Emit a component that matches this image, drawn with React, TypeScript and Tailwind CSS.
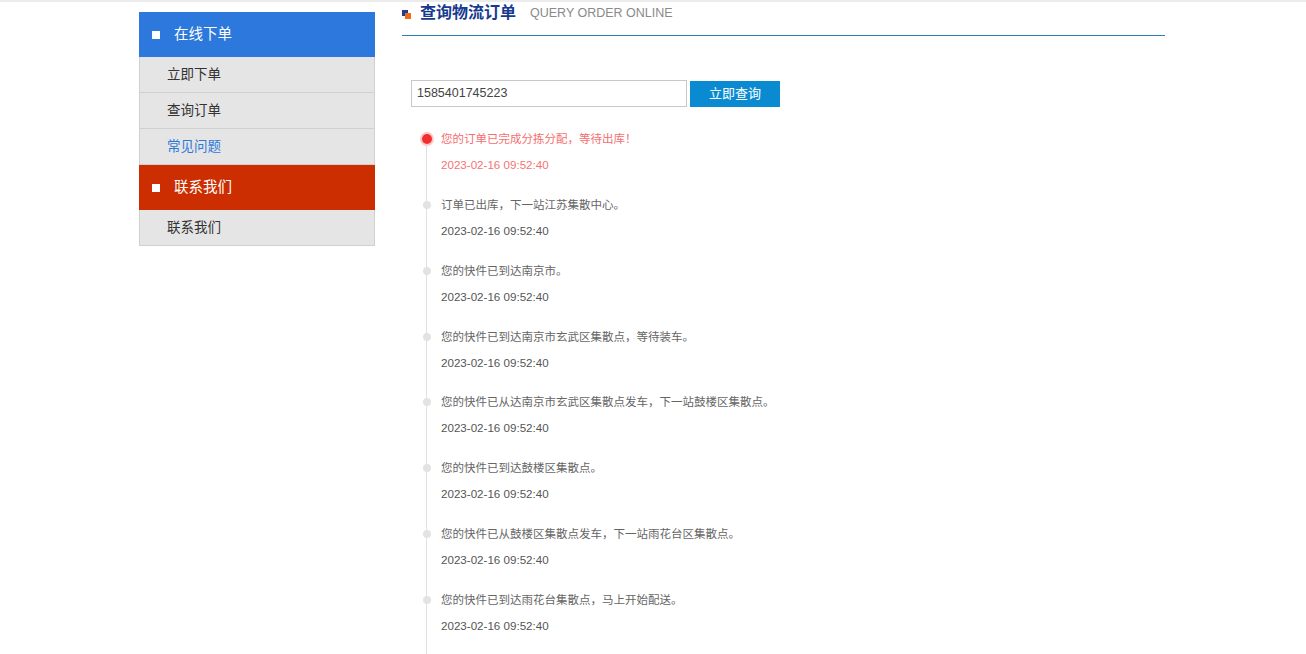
import React from 'react';

const font = { fontFamily: '"Liberation Sans", "Noto Sans CJK SC", sans-serif' };

interface TrackItem {
  text: string;
  time: string;
}

const tracks: TrackItem[] = [
  { text: '您的订单已完成分拣分配，等待出库！', time: '2023-02-16 09:52:40' },
  { text: '订单已出库，下一站江苏集散中心。', time: '2023-02-16 09:52:40' },
  { text: '您的快件已到达南京市。', time: '2023-02-16 09:52:40' },
  { text: '您的快件已到达南京市玄武区集散点，等待装车。', time: '2023-02-16 09:52:40' },
  { text: '您的快件已从达南京市玄武区集散点发车，下一站鼓楼区集散点。', time: '2023-02-16 09:52:40' },
  { text: '您的快件已到达鼓楼区集散点。', time: '2023-02-16 09:52:40' },
  { text: '您的快件已从鼓楼区集散点发车，下一站雨花台区集散点。', time: '2023-02-16 09:52:40' },
  { text: '您的快件已到达雨花台集散点，马上开始配送。', time: '2023-02-16 09:52:40' },
];

function SideHeader({ title, color }: { title: string; color: string }) {
  return (
    <div className={`flex items-center h-[45px] pl-[13px] ${color}`}>
      <span className="w-[8px] h-[8px] bg-white" />
      <span className="ml-[14px] text-[14.5px] text-white">{title}</span>
    </div>
  );
}

function SideItem({ label, active }: { label: string; active?: boolean }) {
  return (
    <div
      className={`flex items-center h-[36px] pl-[27px] pt-[1px] bg-[#e5e5e5] border-x border-b border-[#d0d0d0] text-[13.5px] ${
        active ? 'text-[#2f7ad9]' : 'text-[#333]'
      }`}
    >
      {label}
    </div>
  );
}

export default function App() {
  return (
    <div className="min-h-[654px] bg-white border-t-2 border-[#ececec]" style={font}>
      <div className="flex pl-[139px]">
        <aside className="w-[236px] mt-[10px] shrink-0">
          <SideHeader title="在线下单" color="bg-[#2c78dc]" />
          <SideItem label="立即下单" />
          <SideItem label="查询订单" />
          <SideItem label="常见问题" active />
          <SideHeader title="联系我们" color="bg-[#cc2e02]" />
          <SideItem label="联系我们" />
        </aside>

        <main className="ml-[27px] w-[763px]">
          <div className="flex items-center h-[22px] border-b border-[#2c7fb5] pb-[11px] box-content">
            <span className="relative w-[9px] h-[9px] mt-[2px]">
              <span className="absolute left-0 top-0 w-[6px] h-[6px] bg-[#1d3d95]" />
              <span className="absolute left-[3px] top-[3px] w-[6px] h-[6px] bg-[#f06a0f]" />
            </span>
            <h2 className="ml-[9px] text-[16px] font-bold text-[#163a8e]">查询物流订单</h2>
            <span className="ml-[14px] text-[12.5px] text-[#8a8a8a]">QUERY ORDER ONLINE</span>
          </div>

          <div className="flex items-start mt-[44px] ml-[9px]">
            <div className="w-[276px] h-[27px] border border-[#c8c8c8] flex items-center pl-[5px] text-[12.5px] text-[#444]">
              1585401745223
            </div>
            <button className="ml-[3px] mt-[1px] w-[90px] h-[26px] bg-[#0a8bd1] text-white text-[13px]">
              立即查询
            </button>
          </div>

          <div className="relative mt-[22px] ml-[24px]">
            <div className="absolute left-0 top-[10px] bottom-0 w-px bg-[#e1e1e1]" />
            {tracks.map((t, i) => (
              <div key={i} className="relative h-[65.86px] pl-[15px]">
                {i === 0 ? (
                  <span className="absolute left-[-6.5px] top-[3px] w-[14px] h-[14px] rounded-full bg-[#fcc8c8] flex items-center justify-center">
                    <span className="w-[10px] h-[10px] rounded-full bg-[#f22f2f]" />
                  </span>
                ) : (
                  <span className="absolute left-[-3.5px] top-[6px] w-[8px] h-[8px] rounded-full bg-[#e3e3e6]" />
                )}
                <p
                  className={`leading-[20px] text-[11.5px] ${i === 0 ? 'text-[#f56e6e]' : 'text-[#666]'}`}
                >
                  {t.text}
                </p>
                <p
                  className={`mt-[6px] leading-[20px] text-[11.6px] ${i === 0 ? 'text-[#f57373]' : 'text-[#555]'}`}
                >
                  {t.time}
                </p>
              </div>
            ))}
          </div>
        </main>
      </div>
    </div>
  );
}
